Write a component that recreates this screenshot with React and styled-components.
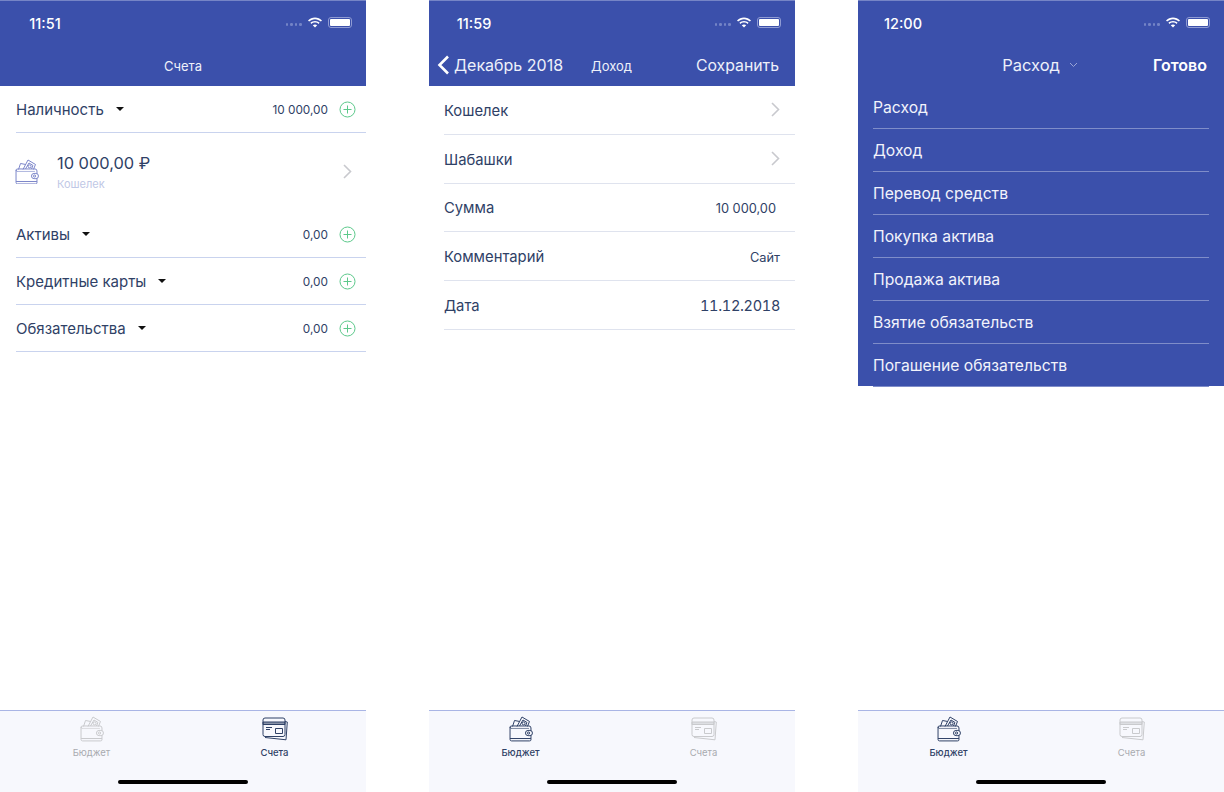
import React from "react";
import styled, { createGlobalStyle } from "styled-components";

const GlobalStyle = createGlobalStyle`
  html, body {
    margin: 0;
    padding: 0;
    background: #fff;
    font-family: Inter, "Noto Sans", "Liberation Sans", sans-serif;
    -webkit-font-smoothing: antialiased;
  }
`;

const INK = "#2f4166";

function WalletIcon({ color = "#7b86c9", size = 24, fill = "#fff" }) {
  return (
    <svg width={size} height={size * 1.08} viewBox="0 0 24 26" fill="none" stroke={color} strokeWidth="1" strokeLinejoin="round">
      <path d="M3.5 10.5 L5.5 4.5 L10.5 5.5" />
      <path d="M8 10.5 L13 1 L20.5 5.5 L18.5 10.5" />
      <path d="M10.5 10 L14 4 L18 6.5 L16.5 10" />
      <circle cx="14.6" cy="7.4" r="1.5" />
      <path d="M2.5 12.5 Q1 12.3 1 11 M1 11 Q1 10 3 10 H20 Q22 10 22 12 V24 Q22 25 20.5 25 H2.5 Q1 25 1 23.5 V11" />
      <path d="M1 22.6 H22" />
      <path d="M2.5 12.5 H20" opacity=".6" />
      <rect x="16.5" y="14.5" width="7" height="5.2" rx="2.6" fill={fill} />
      <circle cx="19.6" cy="17.1" r="1.1" />
    </svg>
  );
}

function CardsIcon({ color = INK, size = 26 }) {
  return (
    <svg width={size} height={size} viewBox="0 0 26 26" fill="none" stroke={color} strokeWidth="1" strokeLinejoin="round">
      <path d="M23 5.5 L25.3 6 L24 23.8 L3 21.5" />
      <rect x="1" y="2" width="22" height="18.5" rx="2" />
      <path d="M1 6 H23 V8.5 H1 Z" fill={color} fillOpacity=".55" />
      <path d="M4 11.5 H10 M4 13.5 H8" />
      <rect x="13.5" y="12.5" width="7" height="5" />
    </svg>
  );
}

function PlusCircle() {
  return (
    <svg width="17" height="17" viewBox="0 0 17 17" fill="none" stroke="#5cc98b" strokeWidth="1">
      <circle cx="8.5" cy="8.5" r="7.5" />
      <path d="M8.5 4.5 V12.5 M4.5 8.5 H12.5" />
    </svg>
  );
}

function Chevron() {
  return (
    <svg width="9" height="15" viewBox="0 0 9 15" fill="none" stroke="#c8c9ce" strokeWidth="1.6">
      <path d="M1 1 L7.5 7.5 L1 14" />
    </svg>
  );
}

function StatusIcons() {
  return (
    <StatusRight>
      <Dots>
        <i /><i /><i /><i />
      </Dots>
      <svg width="16" height="11" viewBox="0 0 16 11" fill="#fff">
        <path d="M8 2.2 C10.3 2.2 12.3 3.1 13.9 4.6 L15 3.4 C13.2 1.5 10.7 .4 8 .4 C5.3 .4 2.8 1.5 1 3.4 L2.1 4.6 C3.7 3.1 5.7 2.2 8 2.2 Z" />
        <path d="M8 5.6 C9.4 5.6 10.6 6.1 11.5 7 L12.6 5.8 C11.4 4.6 9.8 3.9 8 3.9 C6.2 3.9 4.6 4.6 3.4 5.8 L4.5 7 C5.4 6.1 6.6 5.6 8 5.6 Z" />
        <path d="M8 10.6 L10.2 8.3 C9.6 7.7 8.9 7.4 8 7.4 C7.1 7.4 6.4 7.7 5.8 8.3 Z" />
      </svg>
      <Battery>
        <span />
      </Battery>
    </StatusRight>
  );
}

function TabBar({ active, $nudge }) {
  const budget = active === "budget";
  return (
    <Tabs>
      <Tab $nudge={$nudge}>
        <WalletIcon color={budget ? INK : "#c9cacd"} fill="#f7f8fd" />
        <TabLabel $active={budget}>Бюджет</TabLabel>
      </Tab>
      <Tab $nudge={$nudge}>
        <CardsIcon color={budget ? "#c9cacd" : INK} />
        <TabLabel $active={!budget}>Счета</TabLabel>
      </Tab>
      <HomeBar />
    </Tabs>
  );
}

function Section({ name, sum }) {
  return (
    <SectionRow>
      <SectionName>{name}</SectionName>
      <Caret />
      <Sum>{sum}</Sum>
      <PlusCircle />
    </SectionRow>
  );
}

const FORM = [
  { label: "Кошелек", chevron: true },
  { label: "Шабашки", chevron: true },
  { label: "Сумма", value: "10 000,00", inset: true },
  { label: "Комментарий", value: "Сайт" },
  { label: "Дата", value: "11.12.2018", big: true },
];

const TYPES = [
  "Расход",
  "Доход",
  "Перевод средств",
  "Покупка актива",
  "Продажа актива",
  "Взятие обязательств",
  "Погашение обязательств",
];

export default function App() {
  return (
    <>
      <GlobalStyle />
      <Page>
        <Phone>
          <Header>
            <StatusBar>
              <Time>11:51</Time>
              <StatusIcons />
            </StatusBar>
            <NavBar>
              <NavTitle>Счета</NavTitle>
            </NavBar>
          </Header>
          <Section name="Наличность" sum="10 000,00" />
          <WalletRow>
            <WalletIcon />
            <WalletText>
              <WalletSum>10 000,00 ₽</WalletSum>
              <WalletName>Кошелек</WalletName>
            </WalletText>
            <Chevron />
          </WalletRow>
          <Section name="Активы" sum="0,00" />
          <Section name="Кредитные карты" sum="0,00" />
          <Section name="Обязательства" sum="0,00" />
          <Spacer />
          <TabBar active="accounts" />
        </Phone>

        <Phone>
          <Header>
            <StatusBar>
              <Time>11:59</Time>
              <StatusIcons />
            </StatusBar>
            <FormNav>
              <BackLink>
                <svg width="13" height="20" viewBox="0 0 13 20" fill="none" stroke="#fff" strokeWidth="2.6">
                  <path d="M11 1.5 L2.5 10 L11 18.5" />
                </svg>
                Декабрь 2018
              </BackLink>
              <NavCenter>Доход</NavCenter>
              <NavAction>Сохранить</NavAction>
            </FormNav>
          </Header>
          <FormList>
            {FORM.map((row) => (
              <FormRow key={row.label}>
                <FormLabel>{row.label}</FormLabel>
                {row.chevron && <Chevron />}
                {row.value && (
                  <FormValue $big={row.big} $inset={row.inset}>
                    {row.value}
                  </FormValue>
                )}
              </FormRow>
            ))}
          </FormList>
          <Spacer />
          <TabBar active="budget" />
        </Phone>

        <Phone>
          <TallHeader>
            <StatusBar>
              <Time>12:00</Time>
              <StatusIcons />
            </StatusBar>
            <PickerBar>
              <PickerTitle>
                Расход
                <svg width="9" height="6" viewBox="0 0 9 6" fill="none" stroke="#9aa5d6" strokeWidth="1">
                  <path d="M1 1 L4.5 4.5 L8 1" />
                </svg>
              </PickerTitle>
              <Done>Готово</Done>
            </PickerBar>
            <TypeList>
              {TYPES.map((t) => (
                <TypeRow key={t}>{t}</TypeRow>
              ))}
            </TypeList>
          </TallHeader>
          <Spacer />
          <TabBar active="budget" $nudge />
        </Phone>
      </Page>
    </>
  );
}

const Page = styled.div`
  width: 1224px;
  height: 792px;
  display: flex;
  justify-content: space-between;
  overflow: hidden;
`;

const Phone = styled.div`
  width: 366px;
  height: 792px;
  display: flex;
  flex-direction: column;
  background: #fff;
  color: ${INK};
`;

const Header = styled.header`
  height: 86px;
  flex: none;
  background: #3b50ab;
  color: #fff;
  border-top: 1px solid #7685c6;
  box-sizing: border-box;
`;

const TallHeader = styled(Header)`
  height: 386px;
`;

const StatusBar = styled.div`
  height: 44px;
  display: flex;
  align-items: center;
  justify-content: space-between;
  padding: 0 14px 0 18px;
`;

const Time = styled.span`
  width: 54px;
  text-align: center;
  font-size: 14.5px;
  font-weight: 500;
`;

const StatusRight = styled.div`
  display: flex;
  align-items: center;
  gap: 5px;
  margin-top: -2px;
`;

const Dots = styled.div`
  display: flex;
  gap: 2px;
  align-self: flex-end;
  padding-bottom: 2px;
  i {
    width: 2.6px;
    height: 2.6px;
    border-radius: 50%;
    background: #7484c6;
  }
`;

const Battery = styled.div`
  width: 24px;
  height: 11px;
  box-sizing: border-box;
  border: 1px solid #8f9bd3;
  border-radius: 3px;
  padding: 1px;
  span {
    display: block;
    height: 100%;
    background: #fff;
    border-radius: 1px;
  }
`;

const NavBar = styled.div`
  height: 41px;
  display: flex;
  align-items: center;
  justify-content: center;
`;

const FormNav = styled(NavBar)`
  justify-content: flex-start;
  padding: 0 16px 1px 8px;
  box-sizing: border-box;
`;

const NavTitle = styled.span`
  font-size: 13px;
  color: #eef0fa;
`;

const BackLink = styled.span`
  display: flex;
  align-items: center;
  gap: 4px;
  font-size: 16px;
  color: #eef0fa;
  white-space: nowrap;
`;

const NavCenter = styled.span`
  font-size: 13px;
  color: #eef0fa;
  margin-left: 28px;
  padding-top: 2px;
`;

const NavAction = styled.span`
  font-size: 15.8px;
  color: #eef0fa;
  margin-left: auto;
`;

const SectionRow = styled.div`
  height: 47px;
  flex: none;
  box-sizing: border-box;
  margin-left: 16px;
  padding-right: 10px;
  display: flex;
  align-items: center;
  border-bottom: 1px solid #c9d3ee;
`;

const SectionName = styled.span`
  font-size: 15px;
`;

const Caret = styled.span`
  width: 0;
  height: 0;
  margin-left: 12px;
  border-left: 4px solid transparent;
  border-right: 4px solid transparent;
  border-top: 4px solid #111;
`;

const Sum = styled.span`
  margin-left: auto;
  margin-right: 11px;
  padding-top: 1px;
  font-size: 11.8px;
`;

const WalletRow = styled.div`
  height: 78px;
  flex: none;
  display: flex;
  align-items: center;
  padding: 0 14px 1px 15px;
  box-sizing: border-box;
`;

const WalletText = styled.div`
  margin-left: 18px;
  flex: 1;
  display: flex;
  flex-direction: column;
  gap: 4px;
`;

const WalletSum = styled.span`
  font-size: 16.4px;
`;

const WalletName = styled.span`
  font-size: 11px;
  color: #bfc8e6;
`;

const Spacer = styled.div`
  flex: 1;
`;

const Tabs = styled.nav`
  height: 82px;
  flex: none;
  box-sizing: border-box;
  position: relative;
  display: grid;
  grid-template-columns: 183px 183px;
  background: #f7f8fd;
  border-top: 1px solid #a9b5e5;
`;

const Tab = styled.div`
  display: flex;
  flex-direction: column;
  align-items: center;
  padding-top: 5px;
  gap: 5px;
  height: 52px;
  transform: translateX(${(p) => (p.$nudge ? "-1px" : "0")});
`;

const TabLabel = styled.span`
  font-size: 9.5px;
  font-weight: ${(p) => (p.$active ? 500 : 400)};
  color: ${(p) => (p.$active ? INK : "#a9abb0")};
`;

const HomeBar = styled.div`
  position: absolute;
  left: 118px;
  bottom: 8px;
  width: 130px;
  height: 4px;
  border-radius: 2px;
  background: #000;
`;

const FormList = styled.div`
  display: flex;
  flex-direction: column;
`;

const FormRow = styled.div`
  height: 48.75px;
  box-sizing: border-box;
  margin-left: 15px;
  padding-right: 15px;
  display: flex;
  align-items: center;
  justify-content: space-between;
  border-bottom: 1px solid #dfe3ee;
`;

const FormLabel = styled.span`
  font-size: 14.8px;
  padding-top: 2px;
`;

const FormValue = styled.span`
  font-size: ${(p) => (p.$big ? "14.5px" : "12.8px")};
  font-variant-numeric: ${(p) => (p.$big ? "tabular-nums" : "normal")};
  letter-spacing: ${(p) => (p.$big ? "-0.3px" : "0")};
  margin-right: ${(p) => (p.$inset ? "4px" : "0")};
  padding-top: 2px;
`;

const PickerBar = styled.div`
  height: 41px;
  box-sizing: border-box;
  padding: 0 17px 1px 0;
  display: flex;
  align-items: center;
  justify-content: flex-end;
`;

const PickerTitle = styled.span`
  display: flex;
  align-items: center;
  gap: 9px;
  font-size: 16.5px;
  color: #eef0fa;
  margin-right: 75px;
`;

const Done = styled.span`
  font-size: 16px;
  font-weight: 600;
`;

const TypeList = styled.div`
  display: flex;
  flex-direction: column;
`;

const TypeRow = styled.div`
  height: 43px;
  box-sizing: border-box;
  margin: 0 15px;
  display: flex;
  align-items: center;
  font-size: 15.7px;
  color: #f2f3fb;
  border-bottom: 1px solid #7f8dc9;
`;
